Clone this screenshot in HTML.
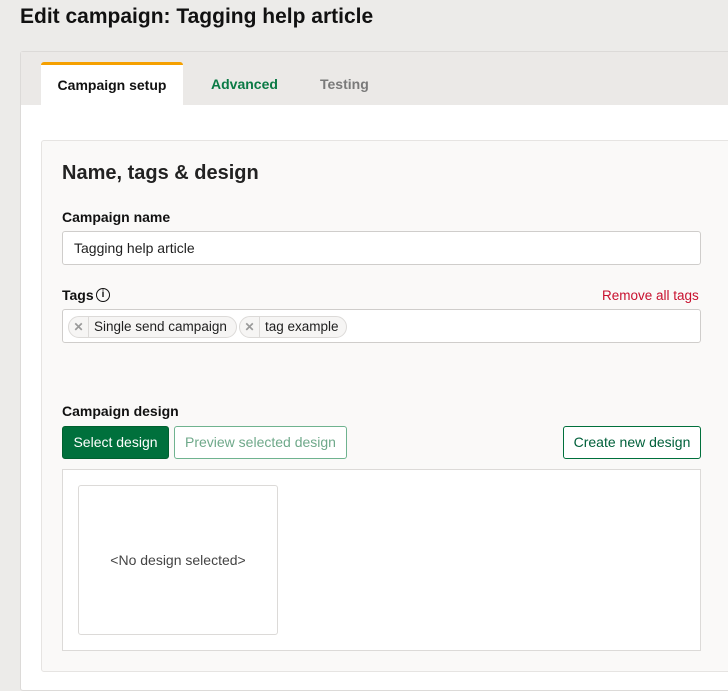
<!DOCTYPE html>
<html><head><style>
*{box-sizing:border-box;margin:0;padding:0}
body{width:728px;height:675px;overflow:hidden;background:#ecebe9;font-family:"Liberation Sans",Arial,sans-serif;color:#1f1f1f;position:relative}
.abs{position:absolute}
h1{position:absolute;left:20px;top:5px;font-size:21px;font-weight:bold;color:#111}
.panel{left:20px;top:51px;width:720px;height:640px;background:#fff;border:1px solid #dcdad8;border-radius:3px}
.tabbar{left:21px;top:52px;width:720px;height:53px;background:#ebe9e7}
.tab{top:62px;height:43px;font-size:14px;font-weight:bold;line-height:45px}
.card{left:41px;top:140px;width:700px;height:532px;background:#faf9f8;border:1px solid #e6e4e2;border-radius:3px}
.lbl{font-size:14px;font-weight:bold;color:#111}
.inp{background:#fff;border:1px solid #cfcdcb;border-radius:3px;left:62px;width:639px;height:34px}
.tag{top:316px;height:22px;border:1px solid #dcdad8;border-radius:11px;background:#f6f5f4;font-size:14px;line-height:20px;display:flex;white-space:nowrap}
.tag .x{width:20px;flex:none;border-right:1px solid #dcdad8;text-align:center;color:#999;font-size:12px;font-weight:bold}
.tag .t{padding:0 6px 0 5px}
.btn{top:426px;height:33px;border-radius:3px;font-size:14px;line-height:31px;text-align:center;white-space:nowrap}
</style></head><body>
<h1>Edit campaign: Tagging help article</h1>
<div class="abs panel"></div>
<div class="abs tabbar"></div>
<div class="abs tab" style="left:41px;width:142px;background:#fff;border-top:3px solid #f5a000;border-radius:3px 3px 0 0;text-align:center;line-height:40px;color:#111">Campaign setup</div>
<div class="abs tab" style="left:211px;color:#0b7a45">Advanced</div>
<div class="abs tab" style="left:320px;color:#7a7a7a">Testing</div>
<div class="abs card"></div>
<div class="abs" style="left:62px;top:162px;font-size:20px;font-weight:bold;color:#222">Name, tags &amp; design</div>
<div class="abs lbl" style="left:62px;top:209px">Campaign name</div>
<div class="abs inp" style="top:231px;font-size:14px;line-height:32px;padding-left:11px">Tagging help article</div>
<div class="abs lbl" style="left:62px;top:287px">Tags</div>
<div class="abs" style="left:96px;top:288px;width:14px;height:14px;border:1.5px solid #111;border-radius:50%;font-size:10px;line-height:11px;text-align:center;font-weight:bold;color:#111">i</div>
<div class="abs" style="left:602px;top:288px;font-size:13.5px;color:#c8102e;white-space:nowrap">Remove all tags</div>
<div class="abs inp" style="top:309px"></div>
<div class="abs tag" style="left:68px;width:169px;font-size:13.5px"><span class="x">✕</span><span class="t">Single send campaign</span></div>
<div class="abs tag" style="left:239px;width:108px;font-size:13.5px"><span class="x">✕</span><span class="t">tag example</span></div>
<div class="abs lbl" style="left:62px;top:403px">Campaign design</div>
<div class="abs btn" style="left:62px;width:107px;background:#00703c;color:#fff;border:1px solid #00602f">Select design</div>
<div class="abs btn" style="left:174px;width:173px;border:1px solid #6fb38f;color:#6fa98a;background:#fff">Preview selected design</div>
<div class="abs btn" style="left:563px;width:138px;border:1px solid #00703c;color:#00603a;background:#fff">Create new design</div>
<div class="abs" style="left:62px;top:469px;width:639px;height:182px;background:#fff;border:1px solid #dcdad8"></div>
<div class="abs" style="left:78px;top:485px;width:200px;height:150px;background:#fff;border:1px solid #dcdad8;border-radius:3px;font-size:14px;color:#444;text-align:center;line-height:148px">&lt;No design selected&gt;</div>
</body></html>
